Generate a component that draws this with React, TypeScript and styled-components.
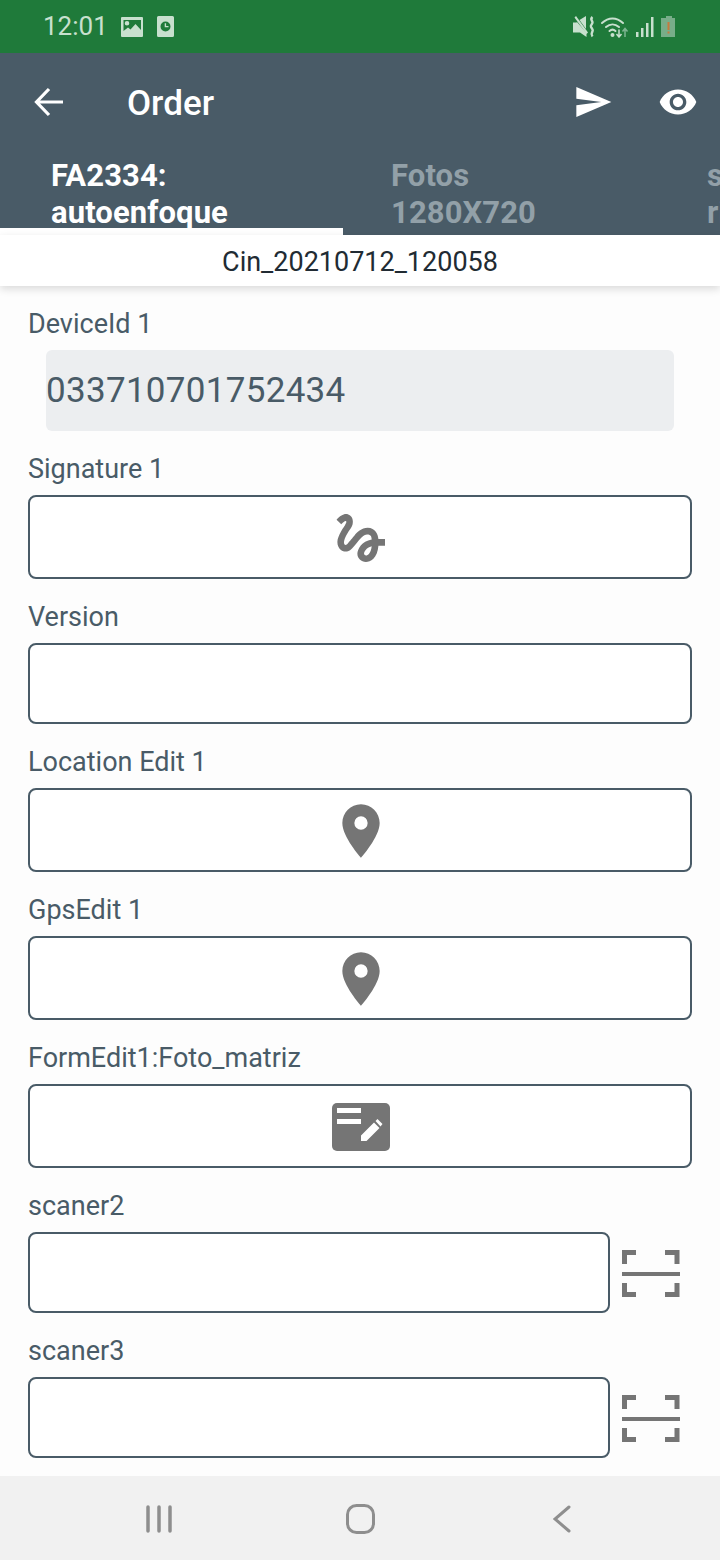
import React from "react";
import styled, { createGlobalStyle } from "styled-components";
import { MdGesture, MdPlace, MdSend, MdVisibility } from "react-icons/md";

const Global = createGlobalStyle`
  html, body { margin: 0; padding: 0; background: #fdfdfd; }
  * { box-sizing: border-box; }
  body { font-family: Roboto, "Liberation Sans", sans-serif; }
`;

const Screen = styled.div`
  width: 720px;
  height: 1560px;
  display: flex;
  flex-direction: column;
  overflow: hidden;
  background: #fdfdfd;
`;

const StatusBar = styled.div`
  height: 53px;
  flex: none;
  display: flex;
  align-items: center;
  padding: 0 42px 0 43px;
  background: #1f7a3a;
  color: #c8e0ce;
`;

const Clock = styled.span`
  font-size: 26px;
  line-height: 53px;
  margin-right: 13px;
`;

const StatusLeft = styled.div`
  display: flex;
  align-items: center;
  gap: 14px;
`;

const StatusRight = styled.div`
  margin-left: auto;
  display: flex;
  align-items: center;
  gap: 5px;
`;

const Header = styled.header`
  flex: none;
  height: 182px;
  background: #495b67;
  display: flex;
  flex-direction: column;
  color: #fff;
`;

const Toolbar = styled.div`
  height: 98px;
  flex: none;
  display: flex;
  align-items: center;
  padding: 0 22px 0 34px;
`;

const BackButton = styled.span`
  display: flex;
  width: 93px;
`;

const Title = styled.h1`
  margin: 0;
  padding-top: 2px;
  font-size: 35px;
  font-weight: 500;
  flex: 1;
`;

const Actions = styled.div`
  display: flex;
  align-items: center;
  gap: 45px;
`;

const Tabs = styled.div`
  display: flex;
  flex: 1;
  overflow: hidden;
`;

const Tab = styled.div<{ $active?: boolean; $width: number; $pad: number }>`
  flex: none;
  width: ${(p) => p.$width}px;
  padding: 6px 0 0 ${(p) => p.$pad}px;
  font-size: 31px;
  line-height: 37px;
  letter-spacing: 0.1px;
  font-weight: 700;
  overflow: hidden;
  white-space: nowrap;
  color: ${(p) => (p.$active ? "#fff" : "#92a0a8")};
  border-bottom: 7px solid ${(p) => (p.$active ? "#fff" : "transparent")};
`;

const FileBar = styled.div`
  flex: none;
  height: 51px;
  padding-top: 3px;
  display: flex;
  align-items: center;
  justify-content: center;
  background: #fff;
  color: #212b33;
  font-size: 27px;
  box-shadow: 0 3px 8px rgba(0, 0, 0, 0.14);
  position: relative;
`;

const Form = styled.main`
  flex: 1;
  padding: 0 28px;
  display: flex;
  flex-direction: column;
  background: #fdfdfd;
`;

const Field = styled.section`
  display: flex;
  flex-direction: column;
`;

const Label = styled.label`
  height: 30px;
  margin: 23px 0 11px;
  font-size: 27px;
  line-height: 30px;
  color: #495b67;
`;

const ReadOnly = styled.div`
  height: 81px;
  margin: 0 18px;
  border-radius: 6px;
  background: #eceef0;
  display: flex;
  align-items: center;
  font-size: 35px;
  letter-spacing: 0.3px;
  color: #495b67;
`;

const InputBox = styled.div<{ $tall?: boolean }>`
  flex: 1 0 auto;
  height: ${(p) => (p.$tall ? 84 : 81)}px;
  padding: 2px 0 0 2px;
  border: 2px solid #495b67;
  border-radius: 8px;
  background: #fff;
  display: flex;
  align-items: center;
  justify-content: center;
  color: #757575;
`;

const InputRow = styled.div`
  display: flex;
  align-items: center;
`;

const ScanSlot = styled.span`
  flex: none;
  width: 82px;
  display: flex;
  justify-content: flex-end;
  padding: 2px 12px 0 0;
`;

const NavBar = styled.nav`
  flex: none;
  height: 84px;
  background: #f1f1f1;
  display: grid;
  grid-template-columns: repeat(3, 201.5px);
  align-items: center;
  padding: 2px 0 0 58px;
`;

const NavSlot = styled.span`
  display: flex;
  justify-content: center;
`;

const Svg = styled.svg`
  display: block;
  flex: none;
`;

const ImageIcon = () => (
  <Svg width="22" height="20" viewBox="0 0 22 20">
    <path fill="#c8e0ce" fillRule="evenodd" d="M1 0h20a1 1 0 0 1 1 1v18a1 1 0 0 1-1 1H1a1 1 0 0 1-1-1V1a1 1 0 0 1 1-1zm1.500 3v11l4.500-3.500 2.500 2 5-5.500 5.500 6V3zM6 4a2.300 2.300 0 1 1 0 4.600A2.300 2.300 0 0 1 6 4z" />
  </Svg>
);

const ClockCard = () => (
  <Svg width="17" height="21" viewBox="0 0 17 21">
    <path fill="#c8e0ce" fillRule="evenodd" d="M1.500 0h14A1.500 1.500 0 0 1 17 1.500v18a1.500 1.500 0 0 1-1.500 1.500h-14A1.500 1.500 0 0 1 0 19.500v-18A1.500 1.500 0 0 1 1.500 0zm7 5.500a5 5 0 1 0 0 10 5 5 0 0 0 0-10zm-.8 1.800h1.400v2.600h2.400v1.300H7.700z" />
  </Svg>
);

const MuteIcon = () => (
  <Svg width="23" height="22" viewBox="0 0 23 22">
    <path fill="#c8e0ce" d="M1 6.500h3.500L5 6l9.500 11v4L8 16.500H1zM7.500 4 14 0v13z" />
    <path fill="#c8e0ce" d="M2.500 1.500 4 0l12 16.500-1.500 1.500z" />
    <path fill="none" stroke="#c8e0ce" strokeWidth="2.400" d="M20.500 1c-3 2.500 0 3.500 0 5.500s-2.500 2.500-1.500 4.500 2.500 2.500 1.500 4.500-2 2.500 0 5" />
  </Svg>
);

const WifiIcon = () => (
  <Svg width="31" height="22" viewBox="0 0 31 22">
    <g fill="none" stroke="#c8e0ce" strokeWidth="2" strokeLinecap="round">
      <path d="M2 7C8.500 1 16.500 1 23 7" />
      <path d="M6 11c4-3.500 9-3.500 13 0" />
      <path d="M9.500 15c2-1.800 4-1.800 6 0" />
    </g>
    <circle cx="12.500" cy="19" r="2" fill="#c8e0ce" />
    <path fill="none" stroke="#c8e0ce" strokeWidth="1.500" d="M19 13.500v7M16.500 18l2.500 3 2.500-3" />
    <path fill="none" stroke="#7fb592" strokeWidth="1.500" d="M25 21v-8M22.500 15.500l2.500-3 2.500 3" />
  </Svg>
);

const SignalIcon = () => (
  <Svg width="19" height="20" viewBox="0 0 19 20">
    <g fill="#c8e0ce">
      <rect x="0" y="15" width="2.500" height="5" />
      <rect x="5" y="11" width="2.500" height="9" />
      <rect x="10" y="6" width="2.500" height="14" />
      <rect x="15" y="0" width="2.500" height="20" />
    </g>
  </Svg>
);

const BatteryIcon = () => (
  <Svg width="18" height="21" viewBox="0 0 18 21">
    <path fill="#78ad89" d="M6 0h6v2h3v19H1V2h5z" />
    <rect x="7.500" y="6" width="2" height="8" fill="#c77a3e" />
    <rect x="7.500" y="15.500" width="2" height="2" fill="#c77a3e" />
  </Svg>
);

const BackIcon = () => (
  <Svg width="30" height="30" viewBox="0 0 30 30">
    <path fill="none" stroke="#fff" strokeWidth="3.200" d="M29 15H3M15 2 2.500 15 15 28" />
  </Svg>
);

const FormIcon = () => (
  <Svg width="58" height="48" viewBox="0 0 58 48">
    <rect width="58" height="48" rx="5" fill="#757575" />
    <rect x="5" y="5" width="24" height="5" fill="#fff" />
    <rect x="5" y="16" width="24" height="5" fill="#fff" />
    <path fill="#fff" d="M29 38v-5.500L42 19.500l5.500 5.500L34.500 38zM43.500 18l2-2 5 5-2 2.500z" />
  </Svg>
);

const ScanIcon = () => (
  <Svg width="58" height="47" viewBox="0 0 58 47">
    <g fill="none" stroke="#757575" strokeWidth="5">
      <path d="M14 2.500H2.500V14" />
      <path d="M43 2.500h12V14" />
      <path d="M2.500 33v11.500H14" />
      <path d="M43 44.500h12V33" />
    </g>
    <rect y="22" width="58" height="4" fill="#757575" />
  </Svg>
);

const RecentsIcon = () => (
  <Svg width="26" height="28" viewBox="0 0 26 28">
    <path stroke="#8e8e8e" strokeWidth="3.500" strokeLinecap="round" d="M2 2v24M13 2v24M24 2v24" />
  </Svg>
);

const HomeIcon = () => (
  <Svg width="29" height="30" viewBox="0 0 29 30">
    <rect x="1.500" y="1.500" width="26" height="27" rx="9" fill="none" stroke="#8e8e8e" strokeWidth="3" />
  </Svg>
);

const ChevronIcon = () => (
  <Svg width="18" height="28" viewBox="0 0 18 28">
    <path fill="none" stroke="#8e8e8e" strokeWidth="3" strokeLinecap="round" d="M16 2 2 14l14 12" />
  </Svg>
);

export default function App() {
  return (
    <Screen>
      <Global />
      <StatusBar>
        <Clock>12:01</Clock>
        <StatusLeft>
          <ImageIcon />
          <ClockCard />
        </StatusLeft>
        <StatusRight>
          <MuteIcon />
          <WifiIcon />
          <SignalIcon />
          <BatteryIcon />
        </StatusRight>
      </StatusBar>
      <Header>
        <Toolbar>
          <BackButton>
            <BackIcon />
          </BackButton>
          <Title>Order</Title>
          <Actions>
            <MdSend size={40} color="#fff" />
            <MdVisibility size={40} color="#fff" />
          </Actions>
        </Toolbar>
        <Tabs>
          <Tab $active $width={343} $pad={51}>
            FA2334:
            <br />
            autoenfoque
          </Tab>
          <Tab $width={315} $pad={48}>
            Fotos
            <br />
            1280X720
          </Tab>
          <Tab $width={62} $pad={49}>
            s
            <br />
            ri
          </Tab>
        </Tabs>
      </Header>
      <FileBar>Cin_20210712_120058</FileBar>
      <Form>
        <Field>
          <Label>DeviceId 1</Label>
          <ReadOnly>033710701752434</ReadOnly>
        </Field>
        <Field>
          <Label>Signature 1</Label>
          <InputBox $tall>
            <MdGesture size={64} />
          </InputBox>
        </Field>
        <Field>
          <Label>Version</Label>
          <InputBox />
        </Field>
        <Field>
          <Label>Location Edit 1</Label>
          <InputBox $tall>
            <MdPlace size={64} />
          </InputBox>
        </Field>
        <Field>
          <Label>GpsEdit 1</Label>
          <InputBox $tall>
            <MdPlace size={64} />
          </InputBox>
        </Field>
        <Field>
          <Label>FormEdit1:Foto_matriz</Label>
          <InputBox $tall>
            <FormIcon />
          </InputBox>
        </Field>
        <Field>
          <Label>scaner2</Label>
          <InputRow>
            <InputBox />
            <ScanSlot>
              <ScanIcon />
            </ScanSlot>
          </InputRow>
        </Field>
        <Field>
          <Label>scaner3</Label>
          <InputRow>
            <InputBox />
            <ScanSlot>
              <ScanIcon />
            </ScanSlot>
          </InputRow>
        </Field>
      </Form>
      <NavBar>
        <NavSlot>
          <RecentsIcon />
        </NavSlot>
        <NavSlot>
          <HomeIcon />
        </NavSlot>
        <NavSlot>
          <ChevronIcon />
        </NavSlot>
      </NavBar>
    </Screen>
  );
}
